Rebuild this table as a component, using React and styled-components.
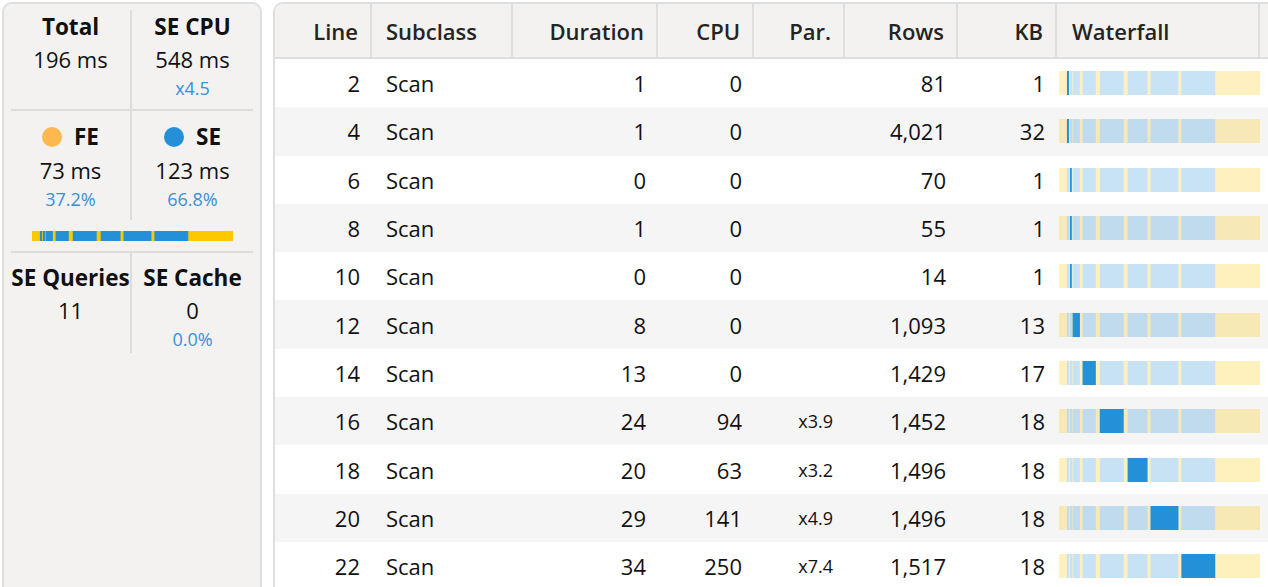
import React from 'react';
import styled, { createGlobalStyle } from 'styled-components';

const GlobalStyle = createGlobalStyle`
  html, body {
    margin: 0;
    padding: 0;
    background: #ffffff;
    overflow: hidden;
  }
  body {
    font-family: "Open Sans", "Noto Sans", "Liberation Sans", sans-serif;
    color: #201f1e;
  }
`;

const BLUE = '#2390d7';
const YELLOW = '#fcc800';
const COLUMNS = '97px 141px 145px 96px 91px 113px 99px 203px 1fr';

// timeline segments of each SE query, in px of a 202px wide bar
const SEGMENTS = {
  2: [8, 2],
  4: [8, 2],
  6: [11, 1.8],
  8: [11, 1.8],
  10: [11, 1.8],
  12: [13.7, 7.3],
  14: [23.7, 13.3],
  16: [41, 24],
  18: [69, 20],
  20: [92, 28],
  22: [123, 34],
};

const ROWS = [
  { line: 2, sub: 'Scan', dur: 1, cpu: 0, par: '', rows: '81', kb: 1 },
  { line: 4, sub: 'Scan', dur: 1, cpu: 0, par: '', rows: '4,021', kb: 32 },
  { line: 6, sub: 'Scan', dur: 0, cpu: 0, par: '', rows: '70', kb: 1 },
  { line: 8, sub: 'Scan', dur: 1, cpu: 0, par: '', rows: '55', kb: 1 },
  { line: 10, sub: 'Scan', dur: 0, cpu: 0, par: '', rows: '14', kb: 1 },
  { line: 12, sub: 'Scan', dur: 8, cpu: 0, par: '', rows: '1,093', kb: 13 },
  { line: 14, sub: 'Scan', dur: 13, cpu: 0, par: '', rows: '1,429', kb: 17 },
  { line: 16, sub: 'Scan', dur: 24, cpu: 94, par: 'x3.9', rows: '1,452', kb: 18 },
  { line: 18, sub: 'Scan', dur: 20, cpu: 63, par: 'x3.2', rows: '1,496', kb: 18 },
  { line: 20, sub: 'Scan', dur: 29, cpu: 141, par: 'x4.9', rows: '1,496', kb: 18 },
  { line: 22, sub: 'Scan', dur: 34, cpu: 250, par: 'x7.4', rows: '1,517', kb: 18 },
];

const Page = styled.div`
  display: flex;
  gap: 11px;
  padding: 2px 0 0 2px;
  height: 587px;
  box-sizing: border-box;
`;

const StatsPanel = styled.aside`
  flex: 0 0 260px;
  height: 620px;
  box-sizing: border-box;
  border: 2px solid #dedede;
  border-radius: 10px;
  background: #f3f2f1;
  padding: 0 7px;
`;

const Section = styled.div`
  display: grid;
  grid-template-columns: 1fr 1fr;
  padding-top: ${({ top }) => top}px;
  border-bottom: ${({ last }) => (last ? 'none' : '2px solid #dcdcdc')};
`;

const StatCell = styled.div`
  text-align: center;
  padding: ${({ pt }) => pt}px 0 ${({ pb }) => pb}px;
  border-right: ${({ divider }) => (divider ? '2px solid #dcdcdc' : 'none')};
`;

const StatLabel = styled.div`
  display: flex;
  justify-content: center;
  align-items: center;
  gap: 12px;
  white-space: nowrap;
  font-size: 22.5px;
  font-weight: 700;
  line-height: ${({ lh }) => lh || 32}px;
  color: #111;
`;

const Dot = styled.span`
  width: 20px;
  height: 20px;
  border-radius: 50%;
  background: ${({ color }) => color};
`;

const StatValue = styled.div`
  font-size: 22px;
  line-height: 32px;
  color: #111;
`;

const StatSub = styled.div`
  font-size: 18px;
  line-height: 26px;
  height: 26px;
  color: #3b8fd9;
`;

const BarRow = styled.div`
  grid-column: 1 / -1;
  display: flex;
  justify-content: center;
  padding: 11px 0 10px;
`;

const Table = styled.section`
  flex: 1;
  min-width: 0;
  border-top: 2px solid #dedede;
  border-left: 2px solid #dedede;
  border-top-left-radius: 10px;
  overflow: hidden;
`;

const HeaderRow = styled.div`
  display: grid;
  grid-template-columns: ${COLUMNS};
  height: 55px;
  box-sizing: border-box;
  background: #f3f2f1;
  border-bottom: 2px solid #dedede;
`;

const HeadCell = styled.div`
  display: flex;
  align-items: center;
  justify-content: ${({ left }) => (left ? 'flex-start' : 'flex-end')};
  padding: 0 ${({ left }) => (left ? 0 : 12)}px 0 ${({ pl }) => pl || 0}px;
  border-right: ${({ last }) => (last ? 'none' : '2px solid #dedede')};
  font-size: 22px;
  font-weight: 600;
  color: #252423;
  white-space: nowrap;
`;

const Row = styled.div`
  display: grid;
  grid-template-columns: ${COLUMNS};
  height: 48.3px;
  background: ${({ alt }) => (alt ? '#f5f5f5' : '#ffffff')};
`;

const Cell = styled.div`
  display: flex;
  align-items: center;
  justify-content: ${({ left }) => (left ? 'flex-start' : 'flex-end')};
  padding: 0 ${({ left }) => (left ? 0 : 12)}px 0 ${({ pl }) => pl || 0}px;
  font-size: ${({ small }) => (small ? 18 : 22)}px;
  color: #111;
  white-space: nowrap;
`;

const Timeline = ({ width, height, dim, active }) => (
  <svg width={width} height={height} viewBox={`0 0 202 ${height}`} preserveAspectRatio="none">
    <g opacity={dim ? 0.25 : 1}>
      <rect x="0" y="0" width="202" height={height} fill={YELLOW} />
      {Object.values(SEGMENTS).map(([x, w], i) => (
        <rect key={i} x={x} y="0" width={w} height={height} fill={BLUE} />
      ))}
    </g>
    {active && <rect x={active[0]} y="0" width={active[1]} height={height} fill={BLUE} />}
  </svg>
);

const Stat = ({ label, value, sub, dot, divider, pt, pb, lh }) => (
  <StatCell divider={divider} pt={pt} pb={pb}>
    <StatLabel lh={lh}>
      {dot && <Dot color={dot} />}
      {label}
    </StatLabel>
    <StatValue>{value}</StatValue>
    <StatSub>{sub}</StatSub>
  </StatCell>
);

const HEADERS = [
  { title: 'Line' },
  { title: 'Subclass', left: true, pl: 14 },
  { title: 'Duration' },
  { title: 'CPU' },
  { title: 'Par.' },
  { title: 'Rows' },
  { title: 'KB' },
  { title: 'Waterfall', left: true, pl: 15 },
];

const App = () => (
  <>
    <GlobalStyle />
    <Page>
      <StatsPanel>
        <Section top={6}>
          <Stat label="Total" value="196 ms" sub="" divider pt={1} pb={8} />
          <Stat label="SE CPU" value="548 ms" sub="x4.5" pt={1} pb={8} />
        </Section>
        <Section top={0}>
          <Stat label="FE" dot="#ffb84d" value="73 ms" sub="37.2%" divider pt={9} pb={8} lh={34} />
          <Stat label="SE" dot={BLUE} value="123 ms" sub="66.8%" pt={9} pb={8} lh={34} />
          <BarRow>
            <Timeline width={201} height={10} />
          </BarRow>
        </Section>
        <Section top={0} last>
          <Stat label="SE Queries" value="11" sub="" divider pt={9} pb={1} />
          <Stat label="SE Cache" value="0" sub="0.0%" pt={9} pb={1} />
        </Section>
      </StatsPanel>

      <Table>
        <HeaderRow>
          {HEADERS.map(h => (
            <HeadCell key={h.title} left={h.left} pl={h.pl}>{h.title}</HeadCell>
          ))}
          <HeadCell last />
        </HeaderRow>
        {ROWS.map((r, i) => (
          <Row key={r.line} alt={i % 2 === 1}>
            <Cell>{r.line}</Cell>
            <Cell left pl={14}>{r.sub}</Cell>
            <Cell>{r.dur}</Cell>
            <Cell>{r.cpu}</Cell>
            <Cell small>{r.par}</Cell>
            <Cell>{r.rows}</Cell>
            <Cell>{r.kb}</Cell>
            <Cell left pl={2}>
              <Timeline width={202} height={24} dim active={SEGMENTS[r.line]} />
            </Cell>
            <Cell />
          </Row>
        ))}
      </Table>
    </Page>
  </>
);

export default App;
